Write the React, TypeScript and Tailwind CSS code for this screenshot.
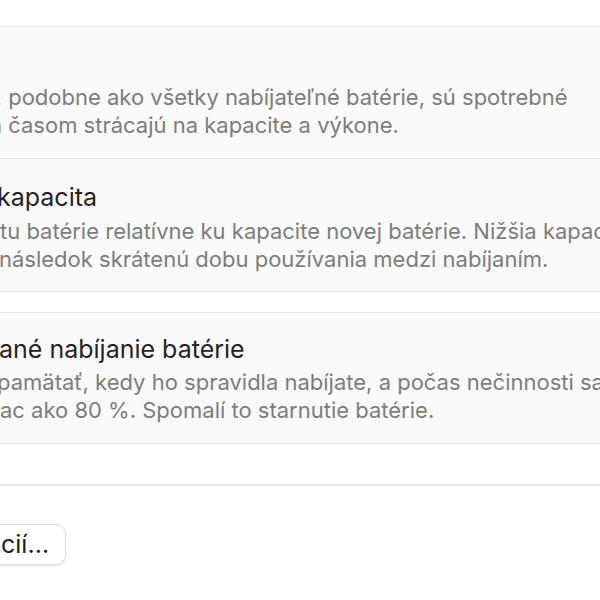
import React from "react";

function Line({
  prefix,
  text,
  anchor,
  className,
}: {
  prefix: string;
  text: string;
  anchor: string;
  className: string;
}) {
  return (
    <div className={"flex whitespace-nowrap -ml-[300px] " + className}>
      <span className={"shrink-0 flex justify-end " + anchor}>
        <span>{prefix}</span>
      </span>
      <span>{text}</span>
    </div>
  );
}

const body = "text-[22px] leading-[28px] text-[#7d7d7d]";
const title = "text-[25px] leading-[30px] text-[#242424]";

export default function App() {
  return (
    <div className="w-[600px] h-[600px] bg-white overflow-hidden font-['Inter',sans-serif] antialiased">
      <div className="h-[26px]" />
      <div className="-mx-[40px] border-y border-[#e7e7e7] bg-[#fafafa]">
        <div className="pl-[40px] pt-[56px] pb-[19px]">
          <Line
            className={body}
            anchor="w-[302px]"
            prefix="Lítium-iónové batérie,"
            text={"\u00a0podobne ako všetky nabíjateľné batérie, sú spotrebné"}
          />
          <Line
            className={body}
            anchor="w-[302px]"
            prefix="komponenty, ktoré sa"
            text={"\u00a0časom strácajú na kapacite a výkone."}
          />
        </div>
        <div className="h-px bg-[#e7e7e7]" />
        <div className="pl-[40px] pt-[23px] pb-[18px]">
          <Line className={title} anchor="w-[297px]" prefix="Maximálna " text="kapacita" />
          <div className="h-[5px]" />
          <Line
            className={body}
            anchor="w-[300px]"
            prefix="Meria kapaci"
            text="tu batérie relatívne ku kapacite novej batérie. Nižšia kapacita môže mať za"
          />
          <Line
            className={body}
            anchor="w-[299px]"
            prefix="za "
            text="následok skrátenú dobu používania medzi nabíjaním."
          />
        </div>
      </div>
      <div className="h-[20px]" />
      <div className="-mx-[40px] border-y border-[#e7e7e7] bg-[#fafafa]">
        <div className="pl-[40px] pt-[21px] pb-[19px]">
          <Line className={title} anchor="w-[299px]" prefix="Optimalizov" text="ané nabíjanie batérie" />
          <div className="h-[4px]" />
          <Line
            className={body}
            anchor="w-[297px]"
            prefix="Váš Mac sa môže naučiť a za"
            text="pamätať, kedy ho spravidla nabíjate, a počas nečinnosti sa bude nabíjať"
          />
          <Line
            className={body}
            anchor="w-[300px]"
            prefix="nie vi"
            text="ac ako 80 %. Spomalí to starnutie batérie."
          />
        </div>
      </div>
      <div className="h-[40px]" />
      <div className="h-[2px] bg-[#e4e4e4]" />
      <div className="h-[38px]" />
      <div className="flex">
        <button className="-ml-[200px] w-[266px] h-[41px] flex items-center justify-end pr-[16px] bg-white border border-[#dedede] rounded-[10px] shadow-[0_1px_2px_rgba(0,0,0,0.12)] text-[25px] text-[#222] whitespace-nowrap">
          Viac informácií…
        </button>
      </div>
    </div>
  );
}
